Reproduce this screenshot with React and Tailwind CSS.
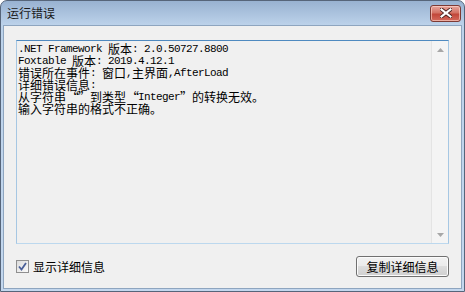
import React from "react";

const LINES = [
  ".NET Framework 版本: 2.0.50727.8800",
  "Foxtable 版本: 2019.4.12.1",
  "错误所在事件: 窗口,主界面,AfterLoad",
  "详细错误信息:",
  "从字符串“”到类型“Integer”的转换无效。",
  "输入字符串的格式不正确。",
];

// ascii runs get a narrow mono face so they take half a CJK cell, like NSimSun
function Line({ text }) {
  const parts = text.split(/([\x00-\x7F]+|[“”])/).filter(Boolean);
  return (
    <div className="h-[12px] leading-[12px] whitespace-pre overflow-visible">
      {parts.map((p, i) => {
        if (/^[\x00-\x7F]+$/.test(p))
          return (
            <span
              key={i}
              className="inline-block h-[12px] align-top font-['Liberation_Mono',monospace] text-[11px] tracking-[-0.6px] leading-[12px]"
            >
              {p}
            </span>
          );
        if (p === "“" || p === "”")
          return (
            <span
              key={i}
              className="inline-block w-[12px] h-[12px] align-top text-center text-[13px] leading-[12px]"
            >
              {p}
            </span>
          );
        return (
          <span
            key={i}
            className="inline-block h-[12px] align-top text-[12px] leading-[12px]"
          >
            {p}
          </span>
        );
      })}
    </div>
  );
}

function Arrow({ up }) {
  return (
    <div className="h-[17px] flex items-center justify-center">
      <svg width="7" height="4" viewBox="0 0 7 4">
        <path
          d={up ? "M0 4 L3.5 0 L7 4 Z" : "M0 0 L3.5 4 L7 0 Z"}
          fill="#a7a7a7"
        />
      </svg>
    </div>
  );
}

export default function App() {
  return (
    <div className="w-[465px] h-[292px] flex flex-col border border-[#56657a] rounded-t-[7px] overflow-hidden bg-[linear-gradient(to_bottom,#98b2d1,#bcd2ea_24px,#c3d7ee)] font-['Noto_Sans_CJK_SC',sans-serif] text-black">
      {/* title bar */}
      <div className="h-[24px] flex items-center justify-between pl-[6px] pr-[3px]">
        <span className="text-[12px] leading-[12px] text-[#1a1a1a]">运行错误</span>
        <button className="w-[31px] h-[17px] rounded-[3px] border border-[#7d3a34] bg-[linear-gradient(to_bottom,#e8a59c,#d37365_45%,#c2473a_55%,#d46a5c)] shadow-[inset_0_0_0_1px_rgba(255,220,210,0.6)] flex items-center justify-center">
          <svg width="12" height="10" viewBox="0 0 12 10">
            <path
              d="M1.5 1.5 L10.5 8.5 M10.5 1.5 L1.5 8.5"
              stroke="#4a2320"
              strokeWidth="4"
              strokeLinecap="square"
            />
            <path
              d="M1.5 1.5 L10.5 8.5 M10.5 1.5 L1.5 8.5"
              stroke="#ffffff"
              strokeWidth="2.2"
              strokeLinecap="square"
            />
          </svg>
        </button>
      </div>

      {/* client area */}
      <div className="flex-1 mx-[2px] mb-[2px] border border-[#8ea5bf] bg-[#f0f0f0] flex flex-col pt-[14px] px-[12px] pb-[11px]">
        <div className="h-[204px] flex border border-t-[#4f8ac0] border-x-[#a6c7e3] border-b-[#bcd8ee] bg-[#f0f0f0]">
          <div className="flex-1 pl-[1px] pt-[2px]">
            {LINES.map((t, i) => (
              <Line key={i} text={t} />
            ))}
          </div>
          <div className="w-[17px] flex flex-col justify-between bg-[#f4f4f4] border-l border-[#e4e4e4]">
            <Arrow up />
            <Arrow />
          </div>
        </div>

        <div className="mt-[12px] h-[21px] flex items-center justify-between">
          <label className="flex items-center gap-[4px] text-[12px] leading-[12px]">
            <span className="w-[13px] h-[13px] border border-[#8f8f8f] bg-[linear-gradient(to_bottom_right,#dcdcdc,#fafafa)] flex items-center justify-center">
              <svg width="9" height="9" viewBox="0 0 9 9">
                <path
                  d="M1 4.5 L3.5 7.5 L8 1"
                  fill="none"
                  stroke="#4a5f98"
                  strokeWidth="1.8"
                />
              </svg>
            </span>
            <span>显示详细信息</span>
          </label>
          <button className="w-[93px] h-[21px] rounded-[3px] border border-[#707070] bg-[linear-gradient(to_bottom,#f2f2f2_0%,#ebebeb_50%,#dddddd_50%,#cfcfcf_100%)] shadow-[inset_0_0_0_1px_#fbfbfb] text-[12px] leading-[12px]">
            复制详细信息
          </button>
        </div>
      </div>
    </div>
  );
}
